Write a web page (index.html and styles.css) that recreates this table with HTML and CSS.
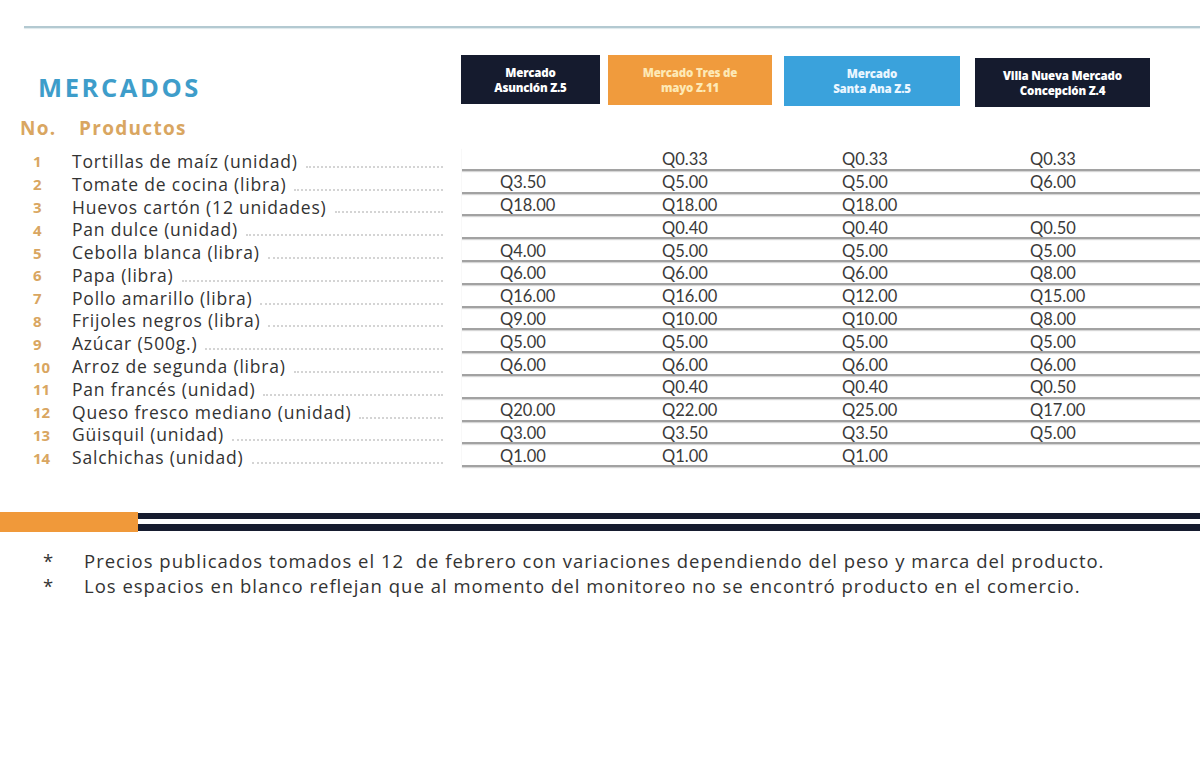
FILE: index.html
```html
<!DOCTYPE html>
<html lang="es">
<head>
<meta charset="utf-8">
<title>Mercados</title>
<link rel="stylesheet" href="styles.css">
</head>
<body>
<div class="page">
  <div class="topline"></div>
  <div class="head">
    <h1 class="title">MERCADOS</h1>
    <div class="mk mk-navy mk-a">Mercado<br>Asunción Z.5</div>
    <div class="mk mk-orange mk-b">Mercado Tres de<br>mayo Z.11</div>
    <div class="mk mk-blue mk-c">Mercado<br>Santa Ana Z.5</div>
    <div class="mk mk-navy mk-d">Villa Nueva Mercado<br>Concepción Z.4</div>
  </div>
  <div class="colhead"><span class="ch-no">No.</span><span class="ch-prod">Productos</span></div>
  <div class="table">
    <div class="row"><span class="num">1</span><span class="name">Tortillas de maíz (unidad)</span><span class="dots"></span><div class="prices"><span class="p p1"></span><span class="p p2">Q0.33</span><span class="p p3">Q0.33</span><span class="p p4">Q0.33</span></div></div>
    <div class="row"><span class="num">2</span><span class="name">Tomate de cocina (libra)</span><span class="dots"></span><div class="prices"><span class="p p1">Q3.50</span><span class="p p2">Q5.00</span><span class="p p3">Q5.00</span><span class="p p4">Q6.00</span></div></div>
    <div class="row"><span class="num">3</span><span class="name">Huevos cartón (12 unidades)</span><span class="dots"></span><div class="prices"><span class="p p1">Q18.00</span><span class="p p2">Q18.00</span><span class="p p3">Q18.00</span><span class="p p4"></span></div></div>
    <div class="row"><span class="num">4</span><span class="name">Pan dulce (unidad)</span><span class="dots"></span><div class="prices"><span class="p p1"></span><span class="p p2">Q0.40</span><span class="p p3">Q0.40</span><span class="p p4">Q0.50</span></div></div>
    <div class="row"><span class="num">5</span><span class="name">Cebolla blanca (libra)</span><span class="dots"></span><div class="prices"><span class="p p1">Q4.00</span><span class="p p2">Q5.00</span><span class="p p3">Q5.00</span><span class="p p4">Q5.00</span></div></div>
    <div class="row"><span class="num">6</span><span class="name">Papa (libra)</span><span class="dots"></span><div class="prices"><span class="p p1">Q6.00</span><span class="p p2">Q6.00</span><span class="p p3">Q6.00</span><span class="p p4">Q8.00</span></div></div>
    <div class="row"><span class="num">7</span><span class="name">Pollo amarillo (libra)</span><span class="dots"></span><div class="prices"><span class="p p1">Q16.00</span><span class="p p2">Q16.00</span><span class="p p3">Q12.00</span><span class="p p4">Q15.00</span></div></div>
    <div class="row"><span class="num">8</span><span class="name">Frijoles negros (libra)</span><span class="dots"></span><div class="prices"><span class="p p1">Q9.00</span><span class="p p2">Q10.00</span><span class="p p3">Q10.00</span><span class="p p4">Q8.00</span></div></div>
    <div class="row"><span class="num">9</span><span class="name">Azúcar (500g.)</span><span class="dots"></span><div class="prices"><span class="p p1">Q5.00</span><span class="p p2">Q5.00</span><span class="p p3">Q5.00</span><span class="p p4">Q5.00</span></div></div>
    <div class="row"><span class="num">10</span><span class="name">Arroz de segunda (libra)</span><span class="dots"></span><div class="prices"><span class="p p1">Q6.00</span><span class="p p2">Q6.00</span><span class="p p3">Q6.00</span><span class="p p4">Q6.00</span></div></div>
    <div class="row"><span class="num">11</span><span class="name">Pan francés (unidad)</span><span class="dots"></span><div class="prices"><span class="p p1"></span><span class="p p2">Q0.40</span><span class="p p3">Q0.40</span><span class="p p4">Q0.50</span></div></div>
    <div class="row"><span class="num">12</span><span class="name">Queso fresco mediano (unidad)</span><span class="dots"></span><div class="prices"><span class="p p1">Q20.00</span><span class="p p2">Q22.00</span><span class="p p3">Q25.00</span><span class="p p4">Q17.00</span></div></div>
    <div class="row"><span class="num">13</span><span class="name">Güisquil (unidad)</span><span class="dots"></span><div class="prices"><span class="p p1">Q3.00</span><span class="p p2">Q3.50</span><span class="p p3">Q3.50</span><span class="p p4">Q5.00</span></div></div>
    <div class="row"><span class="num">14</span><span class="name">Salchichas (unidad)</span><span class="dots"></span><div class="prices"><span class="p p1">Q1.00</span><span class="p p2">Q1.00</span><span class="p p3">Q1.00</span><span class="p p4"></span></div></div>
  </div>
  <div class="stripe"><div class="stripe-orange"></div><div class="stripe-navy"></div></div>
  <ul class="notes">
    <li><span class="star">*</span><span>Precios publicados tomados el 12&nbsp; de febrero con variaciones dependiendo del peso y marca del producto.</span></li>
    <li><span class="star">*</span><span>Los espacios en blanco reflejan que al momento del monitoreo no se encontró producto en el comercio.</span></li>
  </ul>
</div>
</body>
</html>
```
FILE: styles.css
```css
* { box-sizing: border-box; }
html, body { margin: 0; padding: 0; background: #ffffff; }
body { font-family: "Open Sans", Lato, "Noto Sans", sans-serif; color: #333333; }
.page { width: 1200px; height: 768px; overflow: hidden; padding-top: 26px; }

.topline { margin-left: 24px; height: 2px; background: #b3c9d1; box-shadow: 0 1px 1px #dde8ec; }

.head { display: flex; align-items: flex-start; margin-top: 27px; height: 52px; }
.title {
  width: 461px; margin: 19px 0 0 0; padding-left: 38px;
  font-family: "Open Sans", Lato, sans-serif; font-weight: 700; font-size: 25.5px; line-height: 26px;
  color: #3e9dca; letter-spacing: 2.6px;
}
.mk {
  display: flex; align-items: center; justify-content: center; text-align: center;
  color: #ffffff; font-family: "Open Sans", sans-serif; font-weight: 800; font-size: 11.5px; line-height: 15px;
  letter-spacing: -0.2px;
}
.mk-navy { background: #151b2e; }
.mk-orange { background: #f09b3d; color: #fde9b6; }
.mk-blue { background: #3aa2dc; color: #eaf6ff; }
.mk-a { width: 139px; height: 49px; }
.mk-b { width: 164px; height: 50px; margin-left: 8px; }
.mk-c { width: 176px; height: 50px; margin-left: 12px; margin-top: 1px; }
.mk-d { width: 175px; height: 49px; margin-left: 15px; margin-top: 3px; }

.colhead { display: flex; align-items: center; height: 24px; margin-top: 9px; font-family: "Open Sans", sans-serif; font-weight: 700; font-size: 19px; color: #d9a661; letter-spacing: 1.3px; }
.ch-no { padding-left: 20px; width: 79px; }

.table { margin-top: 8px; }
.row { display: flex; align-items: stretch; height: 22.8px; }
.num { width: 72px; padding-left: 33px; font-weight: 700; font-size: 15px; color: #d9a661; display: flex; align-items: center; padding-top: 4px; }
.name { font-size: 17.5px; color: #333333; display: flex; align-items: center; padding-top: 3px; white-space: nowrap; letter-spacing: 0.8px; }
.dots { flex: 1; margin: 0 19px 3px 8px; border-bottom: 2px dotted #d4d4d4; }
.prices { display: flex; width: 738px; border-bottom: 2px solid #a2a2a2; box-shadow: 0 1px 1px #d6d6d6; }
.p { font-family: Lato, sans-serif; font-size: 16.5px; color: #3a3a3a; display: flex; align-items: center; padding-top: 2px; }
.p1 { width: 200px; padding-left: 38px; }
.p2 { width: 180px; }
.p3 { width: 188px; }
.p4 { flex: 1; }

.stripe { display: flex; margin-top: 45px; height: 20px; }
.stripe-orange { width: 138px; background: #f0993a; }
.stripe-navy { flex: 1; border-top: 6px solid #161c2f; border-bottom: 7px solid #161c2f; margin-top: 1px; height: 18px; }

.notes { list-style: none; margin: 16px 0 0 0; padding: 0; font-size: 18.5px; color: #333333; letter-spacing: 1px; }
.notes li { display: flex; height: 25px; align-items: center; white-space: nowrap; }
.star { width: 84px; padding-left: 43px; letter-spacing: 0; }
```
